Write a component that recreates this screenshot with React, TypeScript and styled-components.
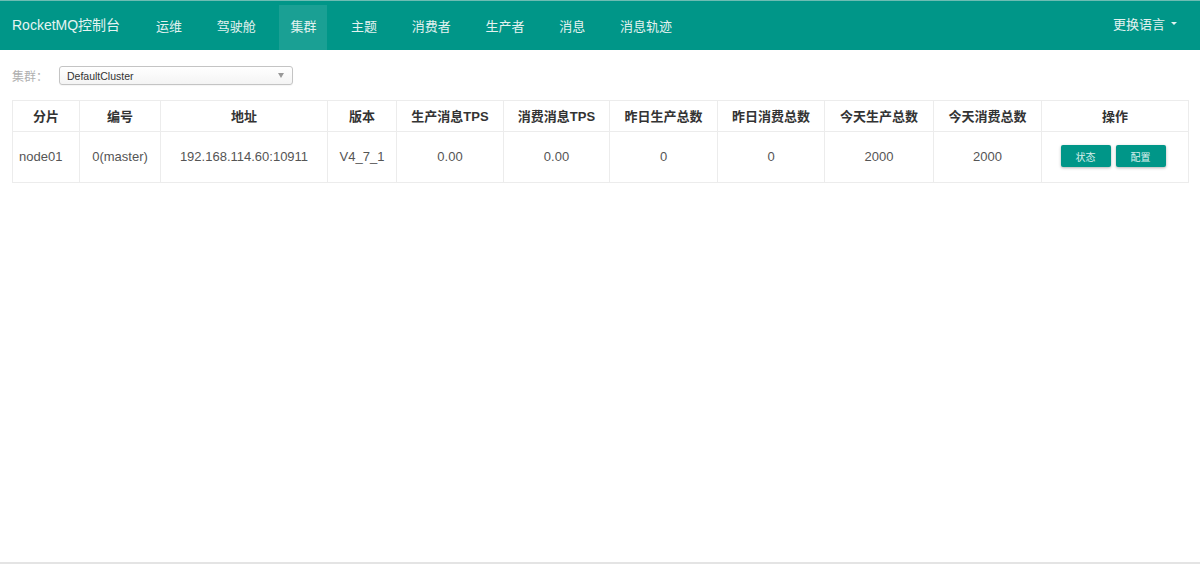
import React from 'react';
import styled, { createGlobalStyle } from 'styled-components';

const GlobalStyle = createGlobalStyle`
  html, body {
    margin: 0;
    padding: 0;
    background: #fff;
  }
  body {
    font-family: "Liberation Sans", Arial, "Noto Sans CJK SC", sans-serif;
    color: #333;
  }
  * { box-sizing: border-box; }
`;

const Page = styled.div`
  height: 100vh;
  display: flex;
  flex-direction: column;
  border-bottom: 2px solid #e4e4e4;
`;

const NavBar = styled.div`
  height: 50px;
  background: #009688;
  border-top: 1px solid #6dbcb3;
  display: flex;
  align-items: stretch;
  padding: 0 23px 0 12px;
`;

const Brand = styled.div`
  width: 133px;
  font-size: 14px;
  color: #e6f4f2;
  display: flex;
  align-items: center;
  padding-bottom: 4px;
`;

const NavList = styled.ul`
  list-style: none;
  margin: 0;
  padding: 0;
  display: flex;
  gap: 12.7px;
`;

const NavItem = styled.li<{ active?: boolean }>`
  padding: 0 11px 5px;
  margin-top: 4px;
  display: flex;
  align-items: center;
  font-size: 13px;
  color: #e3f2f0;
  background: ${p => (p.active ? 'rgba(255,255,255,0.1)' : 'transparent')};
  cursor: pointer;
`;

const LangSwitch = styled.div`
  margin-left: auto;
  display: flex;
  align-items: center;
  gap: 6px;
  font-size: 13px;
  color: #e3f2f0;
  padding-bottom: 5px;
`;

const Caret = styled.span`
  width: 0;
  height: 0;
  border-left: 3px solid transparent;
  border-right: 3px solid transparent;
  border-top: 3px solid #e3f2f0;
`;

const Content = styled.div`
  padding: 16px 12px 0;
`;

const FilterRow = styled.div`
  display: flex;
  align-items: center;
  gap: 11px;
  margin-bottom: 15px;
`;

const FilterLabel = styled.span`
  font-size: 12px;
  color: #b0b0b0;
`;

const SelectBox = styled.div`
  width: 234px;
  height: 19px;
  border: 1px solid #c4c4c4;
  border-radius: 3px;
  background: linear-gradient(#ffffff, #f4f4f4);
  display: flex;
  align-items: center;
  justify-content: space-between;
  padding: 0 8px 0 7px;
  font-size: 10.5px;
  color: #333;
  box-shadow: 0 1px 1px rgba(0,0,0,0.04);
`;

const SelectArrow = styled.span`
  width: 0;
  height: 0;
  border-left: 3px solid transparent;
  border-right: 3px solid transparent;
  border-top: 5px solid #999;
`;

const Table = styled.table`
  width: 1176px;
  table-layout: fixed;
  border-collapse: collapse;
  font-size: 13px;
`;

const Th = styled.th`
  height: 31px;
  border: 1px solid #ececec;
  font-weight: bold;
  color: #333;
  text-align: center;
  padding: 0 0 1px;
`;

const Td = styled.td<{ left?: boolean }>`
  height: 51px;
  border: 1px solid #ececec;
  color: #555;
  text-align: ${p => (p.left ? 'left' : 'center')};
  padding: 0 ${p => (p.left ? '6px' : '0')} 2px;
`;

const ButtonGroup = styled.div`
  display: flex;
  justify-content: center;
  gap: 5px;
  padding-right: 4px;
`;

const ActionButton = styled.button`
  width: 50px;
  height: 22px;
  border: none;
  border-radius: 2px;
  background: #009688;
  color: #d8efec;
  font-size: 10px;
  font-family: inherit;
  box-shadow: 0 1px 3px rgba(0,0,0,0.3);
  cursor: pointer;
  padding: 0;
`;

const columns = [
  { title: '分片', width: 67 },
  { title: '编号', width: 81 },
  { title: '地址', width: 167 },
  { title: '版本', width: 69 },
  { title: '生产消息TPS', width: 107 },
  { title: '消费消息TPS', width: 106 },
  { title: '昨日生产总数', width: 108 },
  { title: '昨日消费总数', width: 107 },
  { title: '今天生产总数', width: 109 },
  { title: '今天消费总数', width: 108 },
  { title: '操作', width: 147 },
];

const navItems = ['运维', '驾驶舱', '集群', '主题', '消费者', '生产者', '消息', '消息轨迹'];

const brokers = [
  {
    name: 'node01',
    index: '0(master)',
    address: '192.168.114.60:10911',
    version: 'V4_7_1',
    inTps: '0.00',
    outTps: '0.00',
    yesterdayIn: '0',
    yesterdayOut: '0',
    todayIn: '2000',
    todayOut: '2000',
  },
];

export default function App() {
  return (
    <Page>
      <GlobalStyle />
      <NavBar>
        <Brand>RocketMQ控制台</Brand>
        <NavList>
          {navItems.map(item => (
            <NavItem key={item} active={item === '集群'}>{item}</NavItem>
          ))}
        </NavList>
        <LangSwitch>
          更换语言
          <Caret />
        </LangSwitch>
      </NavBar>

      <Content>
        <FilterRow>
          <FilterLabel>集群：</FilterLabel>
          <SelectBox>
            DefaultCluster
            <SelectArrow />
          </SelectBox>
        </FilterRow>

        <Table>
          <colgroup>
            {columns.map(c => <col key={c.title} style={{ width: c.width }} />)}
          </colgroup>
          <thead>
            <tr>
              {columns.map(c => <Th key={c.title}>{c.title}</Th>)}
            </tr>
          </thead>
          <tbody>
            {brokers.map(b => (
              <tr key={b.address}>
                <Td left>{b.name}</Td>
                <Td>{b.index}</Td>
                <Td>{b.address}</Td>
                <Td>{b.version}</Td>
                <Td>{b.inTps}</Td>
                <Td>{b.outTps}</Td>
                <Td>{b.yesterdayIn}</Td>
                <Td>{b.yesterdayOut}</Td>
                <Td>{b.todayIn}</Td>
                <Td>{b.todayOut}</Td>
                <Td>
                  <ButtonGroup>
                    <ActionButton>状态</ActionButton>
                    <ActionButton>配置</ActionButton>
                  </ButtonGroup>
                </Td>
              </tr>
            ))}
          </tbody>
        </Table>
      </Content>
    </Page>
  );
}
